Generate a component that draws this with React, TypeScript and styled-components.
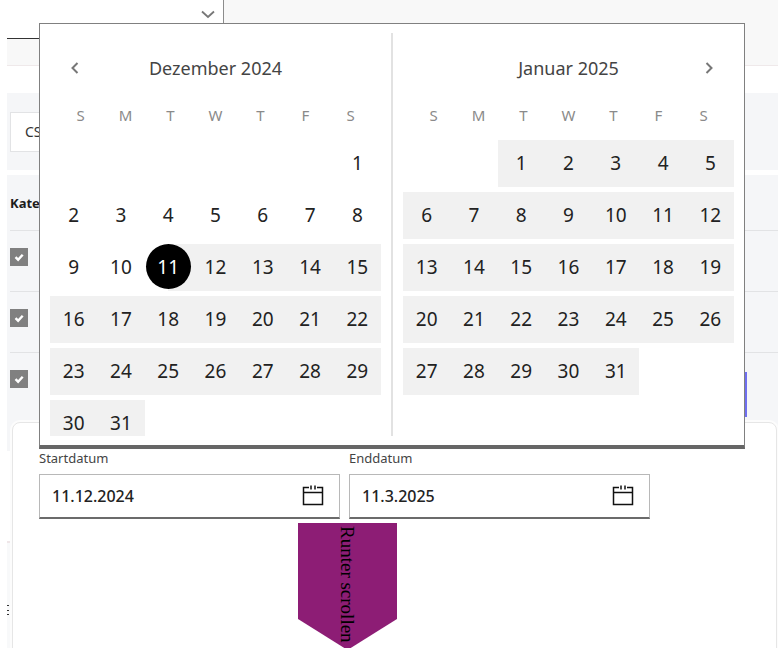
import React from "react";
import styled, { createGlobalStyle } from "styled-components";

const GlobalStyle = createGlobalStyle`
  *, *::before, *::after { box-sizing: border-box; }
  body {
    margin: 0;
    background: #ffffff;
    color: #333333;
    font-family: "Noto Sans", "Open Sans", sans-serif;
  }
  button, input, select { font: inherit; color: inherit; }
`;

const Page = styled.div`
  position: relative;
  min-height: 100vh;
  padding-left: 7px;
  overflow: hidden;
`;

/* Page content behind the dialog */

const TopBar = styled.header`
  display: flex;
  align-items: flex-start;
  height: 66px;
  background: #f8f8f8;
  border-bottom: 1px solid #efe9ea;
`;

const SelectBox = styled.div`
  position: relative;
  width: 217px;
  height: 39px;
`;

const Select = styled.select`
  width: 100%;
  height: 100%;
  appearance: none;
  background: #ffffff;
  border: 0;
  border-right: 1px solid #8c8c8c;
  border-bottom: 1px solid #333333;
  border-radius: 0;
`;

const SelectChevron = styled.svg`
  position: absolute;
  right: 8px;
  top: 10px;
  pointer-events: none;
`;

const FilterBar = styled.section`
  display: flex;
  align-items: center;
  height: 77px;
  margin-top: 27px;
  padding: 0 3px;
  background: #f5f6f8;
`;

const FilterButton = styled.button`
  width: 160px;
  height: 40px;
  padding: 0 14px;
  text-align: left;
  font-size: 14px;
  background: #ffffff;
  border: 1px solid #e2e3e5;
`;

const CategoryPanel = styled.section`
  margin-top: 5px;
  padding: 0 0 34px 3px;
  background: #f5f6f8;
`;

const CategoryTable = styled.table`
  width: 100%;
  border-collapse: separate;
  border-spacing: 0;
`;

const CategoryHead = styled.th`
  height: 56px;
  padding: 0;
  text-align: left;
  font-size: 13px;
  font-weight: 700;
  color: #1c1c1c;
  border-bottom: 1px solid #e2e3e5;
`;

const CategoryCell = styled.td<{ $last?: boolean }>`
  padding: 0;
  line-height: 0;
  border-bottom: ${(p) => (p.$last ? "0" : "1px solid #e2e3e5")};
`;

const CategoryRow = styled.div`
  display: flex;
  align-items: flex-start;
  justify-content: space-between;
  min-height: 60px;
  padding-right: 31px;
`;

const Checkbox = styled.input`
  width: 18px;
  height: 18px;
  margin: 17px 0 0;
  appearance: none;
  background: #808080
    url("data:image/svg+xml,%3Csvg xmlns='http://www.w3.org/2000/svg' viewBox='0 0 18 18'%3E%3Cpath d='M5.5 9.2l2.6 2.5 4.6-5' fill='none' stroke='white' stroke-width='2.4'/%3E%3C/svg%3E")
    center / 18px 18px no-repeat;
`;

const OutlineButton = styled.button`
  width: 120px;
  height: 45px;
  margin-top: 19px;
  background: #ffffff;
  border: 2px solid #6f6ff0;
`;

const LowerPanel = styled.section`
  height: 107px;
  margin-top: 90px;
  padding-top: 62px;
  background: #f8f9fa;
  border-top: 2px solid #efe6e8;
  line-height: 0;
`;

/* Dialog with the date range */

const Dialog = styled.section`
  position: absolute;
  inset: 422px 1px -8px 12px;
  padding: 26px 30px 0 26px;
  background: #ffffff;
  border: 1px solid #e6e6e6;
  border-radius: 8px;
  box-shadow: 0 0 0 2px #fcfcfc;
`;

const DateRange = styled.div`
  position: relative;
`;

const Fields = styled.div`
  display: grid;
  grid-template-columns: repeat(2, minmax(0, 301px));
  gap: 9px;
`;

const Label = styled.label`
  display: block;
  height: 25px;
  font-size: 13px;
  line-height: 19px;
  color: #444444;
`;

const InputBox = styled.div`
  display: flex;
  align-items: center;
  height: 45px;
  padding-right: 15px;
  background: #ffffff;
  border: 1px solid #b8b8b8;
  border-bottom: 2px solid #6b6b6b;
`;

const DateInput = styled.input`
  flex: 1;
  min-width: 0;
  height: 100%;
  padding: 0 12px;
  border: 0;
  outline: 0;
  background: none;
  font-size: 16px;
  font-weight: 500;
  color: #222222;
`;

const IconButton = styled.button`
  display: flex;
  align-items: center;
  justify-content: center;
  padding: 0;
  border: 0;
  background: none;
  color: #777777;
`;

const ScrollHint = styled.div`
  display: flex;
  align-items: center;
  width: 99px;
  height: 127px;
  margin: 4px 0 0 259px;
  padding-top: 3px;
  writing-mode: vertical-rl;
  background: #8d1d75;
  clip-path: polygon(0 0, 100% 0, 100% 96px, 50% 100%, 0 96px);
  font-family: "Liberation Serif", serif;
  font-size: 19px;
  line-height: 99px;
  color: #000000;
`;

/* Calendar popup */

const Popup = styled.div`
  position: absolute;
  left: 0;
  right: 1px;
  bottom: 100%;
  padding: 9px 0;
  background: #ffffff;
  border: 1px solid #808080;
  border-bottom: 4px solid #666666;
`;

const Months = styled.div`
  display: flex;
  height: 403px;
  overflow: hidden;
`;

const Month = styled.section`
  flex: 1;
  min-width: 0;
  padding: 0 10px;

  & + & {
    border-left: 2px solid #e2e2e2;
  }
`;

const MonthHeader = styled.header`
  display: grid;
  grid-template-columns: 50px 1fr 50px;
  align-items: center;
  height: 70px;
`;

const MonthTitle = styled.h2`
  grid-column: 2;
  margin: 0;
  text-align: center;
  font-size: 18px;
  line-height: 24px;
  font-weight: 400;
  color: #444444;
`;

const MonthTable = styled.table`
  display: block;
`;

const Weekdays = styled.tr`
  display: grid;
  grid-template-columns: repeat(7, 1fr);
  padding: 0 8px 13px;
`;

const Weekday = styled.th`
  padding: 0;
  font-size: 15px;
  line-height: 24px;
  font-weight: 400;
  color: #8a8a8a;
`;

const Block = styled.thead`
  display: block;
`;

const Weeks = styled.tbody`
  display: grid;
  gap: 5px;
`;

const Week = styled.tr`
  display: grid;
  grid-template-columns: repeat(7, 1fr);
  height: 47px;
`;

const DayCell = styled.td<{ $range: "none" | "start" | "in" }>`
  display: flex;
  align-items: flex-start;
  justify-content: center;
  padding: 0;
  background: ${(p) =>
    p.$range === "in"
      ? "#f1f1f1"
      : p.$range === "start"
        ? "linear-gradient(to right, #ffffff 50%, #f1f1f1 50%)"
        : "none"};
`;

const Day = styled.button<{ $selected: boolean }>`
  width: 45px;
  height: 45px;
  padding: 0;
  border: 0;
  border-radius: 50%;
  background: ${(p) => (p.$selected ? "#000000" : "none")};
  color: ${(p) => (p.$selected ? "#ffffff" : "#222222")};
  font-size: 19px;
  line-height: 24px;
`;

const WEEKDAYS = ["S", "M", "T", "W", "T", "F", "S"];

type MonthData = {
  title: string;
  offset: number;
  days: number;
  rangeFrom: number;
  selected?: number;
};

function buildWeeks(offset: number, days: number): (number | null)[][] {
  const count = Math.ceil((offset + days) / 7);
  return Array.from({ length: count }, (_, w) =>
    Array.from({ length: 7 }, (_, d) => {
      const day = w * 7 + d - offset + 1;
      return day >= 1 && day <= days ? day : null;
    })
  );
}

function Arrow({ direction }: { direction: "left" | "right" }) {
  return (
    <svg width="12" height="14" viewBox="0 0 12 14" fill="none" stroke="currentColor" strokeWidth="2">
      <path d={direction === "left" ? "M8.5 2L3.5 7l5 5" : "M3.5 2l5 5-5 5"} />
    </svg>
  );
}

function CalendarIcon() {
  return (
    <svg width="22" height="22" viewBox="0 0 22 22" fill="none" stroke="#111111" strokeWidth="1.5">
      <path d="M7 2.5H1.5v17h19v-17H15M1.5 7.5h19M9 0.5v4M13 0.5v4" />
    </svg>
  );
}

function CalendarMonth({
  title,
  offset,
  days,
  rangeFrom,
  selected,
  nav,
}: MonthData & { nav: "left" | "right" }) {
  const navButton = (
    <IconButton type="button" aria-label={nav === "left" ? "Vorheriger Monat" : "Nächster Monat"}>
      <Arrow direction={nav} />
    </IconButton>
  );
  const rangeOf = (day: number | null) => {
    if (day === null || day < rangeFrom) return "none";
    return day === selected ? "start" : "in";
  };
  return (
    <Month>
      <MonthHeader>
        {nav === "left" && navButton}
        <MonthTitle>{title}</MonthTitle>
        {nav === "right" && navButton}
      </MonthHeader>
      <MonthTable aria-label={title}>
        <Block>
          <Weekdays>
            {WEEKDAYS.map((name, i) => (
              <Weekday key={i} scope="col">
                {name}
              </Weekday>
            ))}
          </Weekdays>
        </Block>
        <Weeks>
          {buildWeeks(offset, days).map((week, w) => (
            <Week key={w}>
              {week.map((day, d) => (
                <DayCell key={d} $range={rangeOf(day)}>
                  {day !== null && (
                    <Day type="button" $selected={day === selected}>
                      {day}
                    </Day>
                  )}
                </DayCell>
              ))}
            </Week>
          ))}
        </Weeks>
      </MonthTable>
    </Month>
  );
}

function DateField({ id, label, value }: { id: string; label: string; value: string }) {
  return (
    <div>
      <Label htmlFor={id}>{label}</Label>
      <InputBox>
        <DateInput id={id} type="text" defaultValue={value} />
        <IconButton type="button" aria-label={`${label} wählen`}>
          <CalendarIcon />
        </IconButton>
      </InputBox>
    </div>
  );
}

export default function App() {
  return (
    <>
      <GlobalStyle />
      <Page>
        <TopBar>
          <SelectBox>
            <Select aria-label="Auswahl" />
            <SelectChevron width="16" height="10" viewBox="0 0 16 10" fill="none" stroke="#777777" strokeWidth="1.8">
              <path d="M2 1.5l6 5.5 6-5.5" />
            </SelectChevron>
          </SelectBox>
        </TopBar>
        <FilterBar>
          <FilterButton type="button">CS</FilterButton>
        </FilterBar>
        <CategoryPanel>
          <CategoryTable>
            <thead>
              <tr>
                <CategoryHead scope="col">Kate</CategoryHead>
              </tr>
            </thead>
            <tbody>
              {[1, 2, 3].map((row) => (
                <tr key={row}>
                  <CategoryCell $last={row === 3}>
                    <CategoryRow>
                      <Checkbox type="checkbox" defaultChecked aria-label={`Kategorie ${row}`} />
                      {row === 3 && <OutlineButton type="button" aria-label="Bearbeiten" />}
                    </CategoryRow>
                  </CategoryCell>
                </tr>
              ))}
            </tbody>
          </CategoryTable>
        </CategoryPanel>
        <LowerPanel>
          <svg width="2" height="11" viewBox="0 0 2 11" fill="#333333">
            <path d="M0 0h2v1H0zM0 5h2v1H0zM0 9h2v1H0z" />
          </svg>
        </LowerPanel>
        <Dialog role="dialog" aria-label="Zeitraum">
          <DateRange>
            <Fields>
              <DateField id="start" label="Startdatum" value="11.12.2024" />
              <DateField id="end" label="Enddatum" value="11.3.2025" />
            </Fields>
            <ScrollHint>Runter scrollen</ScrollHint>
            <Popup>
              <Months>
                <CalendarMonth nav="left" title="Dezember 2024" offset={6} days={31} rangeFrom={11} selected={11} />
                <CalendarMonth nav="right" title="Januar 2025" offset={2} days={31} rangeFrom={1} />
              </Months>
            </Popup>
          </DateRange>
        </Dialog>
      </Page>
    </>
  );
}
